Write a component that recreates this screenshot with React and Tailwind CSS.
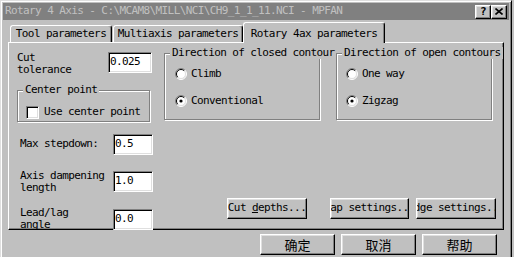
import React from "react";

// Win95 style bevels
const raised =
  "border border-t-white border-l-white border-r-black border-b-black shadow-[inset_-1px_-1px_0_#808080,inset_1px_1px_0_#dfdfdf] bg-[#c0c0c0]";
const sunken =
  "border border-t-[#808080] border-l-[#808080] border-r-white border-b-white shadow-[inset_1px_1px_0_#000,inset_-1px_-1px_0_#dfdfdf] bg-white";
const etched =
  "relative border border-[#808080] shadow-[inset_1px_1px_0_#fff,1px_1px_0_#fff]";

function Radio({ checked }) {
  return (
    <svg width="12" height="12" viewBox="0 0 12 12" className="shrink-0">
      <circle cx="6" cy="6" r="5" fill="#fff" />
      <path d="M2.1 9.9 A5.5 5.5 0 0 1 9.9 2.1" stroke="#808080" fill="none" />
      <path d="M9.9 2.1 A5.5 5.5 0 0 1 2.1 9.9" stroke="#fff" fill="none" />
      <path d="M2.8 9.2 A4.5 4.5 0 0 1 9.2 2.8" stroke="#000" fill="none" />
      <path d="M9.2 2.8 A4.5 4.5 0 0 1 2.8 9.2" stroke="#dfdfdf" fill="none" />
      {checked && <circle cx="6" cy="6" r="1.6" fill="#000" />}
    </svg>
  );
}

function Field({ value, w }) {
  return (
    <div className={`${sunken} h-[21px] ${w} flex items-center pl-[1px] shrink-0`}>
      {value}
    </div>
  );
}

function Group({ title, w, children }) {
  return (
    <div className={`${etched} ${w} h-[67px] shrink-0`}>
      <span className="absolute -top-[7px] left-[5px] px-[2px] bg-[#c0c0c0] whitespace-nowrap leading-[12px]">
        {title}
      </span>
      {children}
    </div>
  );
}

function PushButton({ w, children, className = "" }) {
  return (
    <div
      className={`${raised} ${w} h-[21px] flex items-center justify-center overflow-hidden whitespace-nowrap shrink-0 ${className}`}
    >
      {children}
    </div>
  );
}

export default function App() {
  return (
    <div className="w-[514px] h-[257px] bg-[#c0c0c0] overflow-hidden font-['DejaVu_Sans_Mono',monospace] text-[11px] tracking-[-0.6px] text-black">
      <div className="w-[512px] h-[280px] border border-[#dfdfdf] border-r-black border-b-black shadow-[inset_1px_1px_0_#fff,inset_-1px_-1px_0_#808080] p-[2px]">
        {/* Title bar */}
        <div className="h-[17px] bg-[#808080] flex items-center pl-[2px] pr-[2px]">
          <span className="text-[#c0c0c0] whitespace-nowrap">
            Rotary 4 Axis - C:\MCAM8\MILL\NCI\CH9_1_1_11.NCI - MPFAN
          </span>
          <div className="ml-auto flex">
            <div className={`${raised} w-[16px] h-[14px] flex items-center justify-center font-bold text-[11px] leading-none`}>
              ?
            </div>
            <div className={`${raised} w-[16px] h-[14px] flex items-center justify-center`}>
              <svg width="8" height="7" viewBox="0 0 8 7">
                <path d="M0.5 0.5 L7.5 6.5 M7.5 0.5 L0.5 6.5" stroke="#000" strokeWidth="1.6" />
              </svg>
            </div>
          </div>
        </div>

        {/* Tabs */}
        <div className="mt-[2px] ml-[7px] h-[20px] flex items-end">
          <div className="w-[102px] h-[17px] border border-b-0 border-t-white border-l-white border-r-black shadow-[inset_-1px_0_0_#808080] rounded-t-[3px] flex items-center justify-center">
            Tool parameters
          </div>
          <div className="ml-[1px] w-[130px] h-[17px] border border-b-0 border-t-white border-l-white border-r-black shadow-[inset_-1px_0_0_#808080] rounded-t-[3px] flex items-center justify-center">
            Multiaxis parameters
          </div>
          <div className="relative z-10 -mb-[1px] w-[142px] h-[21px] bg-[#c0c0c0] border border-b-0 border-t-white border-l-white border-r-black shadow-[inset_-1px_0_0_#808080] rounded-t-[3px] flex items-start pt-[3px] justify-center">
            Rotary 4ax parameters
          </div>
        </div>

        {/* Tab panel */}
        <div className="ml-[5px] w-[496px] h-[188px] border border-t-white border-l-white border-r-black border-b-black shadow-[inset_-1px_-1px_0_#808080] pl-[8px] pt-[9px] flex">
          {/* Left column */}
          <div className="w-[147px] flex flex-col shrink-0">
            <div className="flex items-start">
              <div className="w-[91px] leading-[12px]">
                Cut
                <br />
                tolerance
              </div>
              <Field value="0.025" w="w-[44px]" />
            </div>

            <div className={`${etched} mt-[14px] w-[133px] h-[33px]`}>
              <span className="absolute -top-[7px] left-[5px] px-[2px] bg-[#c0c0c0] whitespace-nowrap leading-[12px]">
                Center point
              </span>
              <div className="flex items-center mt-[13px] ml-[8px] gap-[5px]">
                <div className={`${sunken} w-[13px] h-[13px]`} />
                <span>Use center point</span>
              </div>
            </div>

            <div className="mt-[12px] pl-[3px] flex items-center">
              <div className="w-[93px]">Max stepdown:</div>
              <Field value="0.5" w="w-[40px]" />
            </div>

            <div className="mt-[15px] pl-[3px] flex items-center">
              <div className="w-[93px] leading-[12px]">
                Axis dampening
                <br />
                length
              </div>
              <Field value="1.0" w="w-[40px]" />
            </div>

            <div className="mt-[15px] pl-[3px] flex items-center">
              <div className="w-[93px] leading-[12px] -mt-[2px]">
                Lead/lag
                <br />
                angle
              </div>
              <Field value="0.0" w="w-[40px]" />
            </div>
          </div>

          {/* Right area */}
          <div className="flex flex-col">
            <div className="mt-[1px] flex gap-[16px]">
              <Group title="Direction of closed contour" w="w-[156px]">
                <div className="pt-[14px] pl-[10px] flex flex-col gap-[15px]">
                  <div className="h-[12px] flex items-center gap-[4px]">
                    <Radio />
                    <span>Climb</span>
                  </div>
                  <div className="h-[12px] flex items-center gap-[4px]">
                    <Radio checked />
                    <span>Conventional</span>
                  </div>
                </div>
              </Group>
              <Group title="Direction of open contours" w="w-[156px]">
                <div className="pt-[14px] pl-[9px] flex flex-col gap-[15px]">
                  <div className="h-[12px] flex items-center gap-[4px]">
                    <Radio />
                    <span>One way</span>
                  </div>
                  <div className="h-[12px] flex items-center gap-[4px]">
                    <Radio checked />
                    <span>Zigzag</span>
                  </div>
                </div>
              </Group>
            </div>

            <div className="mt-[78px] pl-[63px] flex">
              <PushButton w="w-[80px]">
                <span>
                  Cut <span className="underline">d</span>epths...
                </span>
              </PushButton>
              <PushButton w="w-[79px]" className="ml-[23px]">
                Gap settings...
              </PushButton>
              <PushButton w="w-[80px]" className="ml-[7px]">
                Edge settings...
              </PushButton>
            </div>
          </div>
        </div>

        {/* Dialog buttons */}
        <div className="mt-[4px] pr-[12px] flex justify-end gap-[6px] font-['Noto_Sans_CJK_SC',sans-serif] text-[13px] tracking-normal">
          <PushButton w="w-[75px]">确定</PushButton>
          <PushButton w="w-[75px]">取消</PushButton>
          <PushButton w="w-[75px]">帮助</PushButton>
        </div>
      </div>
    </div>
  );
}
